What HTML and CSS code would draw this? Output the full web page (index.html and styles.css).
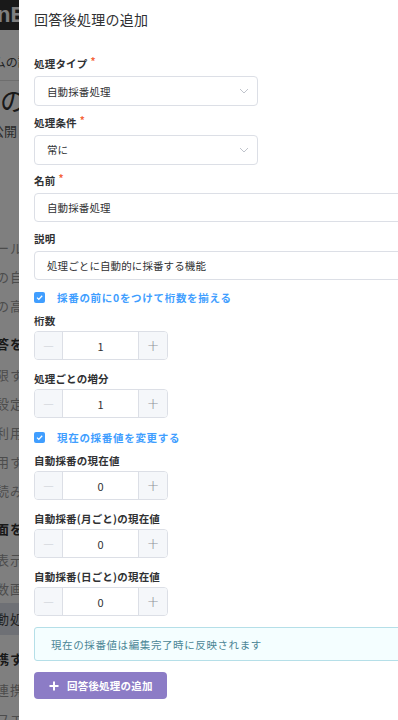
FILE: index.html
```html
<!DOCTYPE html>
<html lang="ja">
<head>
    <meta charset="UTF-8">
    <meta name="viewport" content="width=device-width, initial-scale=1.0">
    <title>回答後処理の追加</title>
    <link rel="stylesheet" href="styles.css">
</head>
<body>
    <!-- page behind the drawer -->
    <div class="page">
        <header class="topbar"><span class="logo">nB</span></header>
        <div class="page-title-small">フォームの設定</div>
        <div class="page-title">の設定</div>
        <div class="page-sub">非公開</div>
        <ul class="menu">
            <li class="menu-item gap">メール</li>
            <li class="menu-item">その自動</li>
            <li class="menu-item">その高度</li>
            <li class="menu-item head">回答を設定</li>
            <li class="menu-item">制限する</li>
            <li class="menu-item">の設定で</li>
            <li class="menu-item">を利用す</li>
            <li class="menu-item">を用する</li>
            <li class="menu-item">の読み込</li>
            <li class="menu-item head">画面を設</li>
            <li class="menu-item">の表示を</li>
            <li class="menu-item">の数画面</li>
            <li class="menu-item active">自動処理</li>
            <li class="menu-item head">連携する</li>
            <li class="menu-item">と連携す</li>
            <li class="menu-item">のフエー</li>
        </ul>
    </div>
    <div class="mask"></div>

    <aside class="drawer">
        <div class="drawer-header">
            <h2 class="drawer-title">回答後処理の追加</h2>
        </div>
        <form class="drawer-body">
            <div class="form-item">
                <label class="form-label required">処理タイプ</label>
                <div class="select">
                    <span>自動採番処理</span>
                    <svg class="chevron" width="10" height="6" viewBox="0 0 10 6"><path d="M1 1l4 4 4-4" fill="none" stroke="#c0c4cc" stroke-width="1"/></svg>
                </div>
            </div>
            <div class="form-item">
                <label class="form-label required">処理条件</label>
                <div class="select">
                    <span>常に</span>
                    <svg class="chevron" width="10" height="6" viewBox="0 0 10 6"><path d="M1 1l4 4 4-4" fill="none" stroke="#c0c4cc" stroke-width="1"/></svg>
                </div>
            </div>
            <div class="form-item">
                <label class="form-label required">名前</label>
                <div class="input">自動採番処理</div>
            </div>
            <div class="form-item">
                <label class="form-label">説明</label>
                <div class="input">処理ごとに自動的に採番する機能</div>
            </div>

            <div class="check-row">
                <span class="checkbox"><svg width="11" height="11" viewBox="0 0 11 11"><path d="M3 5.6l1.8 1.8L8.2 3.8" fill="none" stroke="#fff" stroke-width="1.3"/></svg></span>
                <span class="check-label">採番の前に0をつけて桁数を揃える</span>
            </div>
            <div class="form-item num">
                <label class="form-label">桁数</label>
                <div class="number">
                    <span class="num-btn">&minus;</span>
                    <span class="num-value">1</span>
                    <span class="num-btn">+</span>
                </div>
            </div>
            <div class="form-item num last">
                <label class="form-label">処理ごとの増分</label>
                <div class="number">
                    <span class="num-btn">&minus;</span>
                    <span class="num-value">1</span>
                    <span class="num-btn">+</span>
                </div>
            </div>

            <div class="check-row">
                <span class="checkbox"><svg width="11" height="11" viewBox="0 0 11 11"><path d="M3 5.6l1.8 1.8L8.2 3.8" fill="none" stroke="#fff" stroke-width="1.3"/></svg></span>
                <span class="check-label">現在の採番値を変更する</span>
            </div>
            <div class="form-item num">
                <label class="form-label">自動採番の現在値</label>
                <div class="number">
                    <span class="num-btn">&minus;</span>
                    <span class="num-value">0</span>
                    <span class="num-btn">+</span>
                </div>
            </div>
            <div class="form-item num">
                <label class="form-label">自動採番(月ごと)の現在値</label>
                <div class="number">
                    <span class="num-btn">&minus;</span>
                    <span class="num-value">0</span>
                    <span class="num-btn">+</span>
                </div>
            </div>
            <div class="form-item num">
                <label class="form-label">自動採番(日ごと)の現在値</label>
                <div class="number">
                    <span class="num-btn">&minus;</span>
                    <span class="num-value">0</span>
                    <span class="num-btn">+</span>
                </div>
            </div>

            <div class="notice">現在の採番値は編集完了時に反映されます</div>

            <button type="button" class="btn-add">
                <svg width="10" height="10" viewBox="0 0 10 10"><path d="M5 0.5v9M0.5 5h9" stroke="#fff" stroke-width="2"/></svg>
                <span>回答後処理の追加</span>
            </button>
        </form>
    </aside>
</body>
</html>
```

FILE: styles.css
```css
html, body {
    height: 100%;
    overflow: hidden;
}

body {
    margin: 0;
    font-family: "Noto Sans CJK JP", "Noto Sans", sans-serif;
    color: #303133;
    background-color: #fff;
}

/* page behind the drawer */
.page {
    margin-left: -26px;
    color: #888;
}

.topbar {
    height: 30px;
    background-color: #333;
    display: flex;
    align-items: center;
}

.logo {
    color: #fff;
    font-family: "Liberation Sans", sans-serif;
    font-weight: bold;
    font-size: 22px;
    margin-left: 23px;
}

.page-title-small {
    font-size: 12px;
    line-height: 16px;
    margin-top: 24px;
    text-indent: -16px;
    color: #444;
    padding-bottom: 10px;
    border-bottom: 1px solid #ddd;
}

.page-title {
    font-size: 26px;
    line-height: 34px;
    margin-top: 2px;
    padding-left: 26px;
    color: #333;
}

.page-sub {
    font-size: 13px;
    line-height: 20px;
    margin-top: 4px;
    padding-left: 4px;
    color: #555;
}

.menu {
    list-style: none;
    margin: 0;
    padding: 0;
}

.menu-item {
    font-size: 13px;
    line-height: 29px;
    padding-left: 8px;
    color: #999;
    letter-spacing: 1px;
}

.menu-item.gap {
    margin-top: 92px;
}

.menu-item.head {
    font-weight: bold;
    color: #333;
    margin-top: 8px;
    line-height: 32px;
}

.menu-item.active {
    background-color: #dde1ea;
    color: #444;
    line-height: 32px;
}

.mask {
    position: fixed;
    top: 0;
    right: 0;
    bottom: 0;
    left: 0;
    background-color: rgba(0, 0, 0, 0.5);
}

/* drawer */
.drawer {
    position: fixed;
    top: 0;
    bottom: 0;
    left: 19px;
    width: 470px;
    background-color: #fff;
}

.drawer-header {
    padding: 11px 15px 0;
}

.drawer-title {
    margin: 0;
    font-size: 14px;
    line-height: 16px;
    font-weight: normal;
    color: #303133;
    letter-spacing: 0.3px;
}

.drawer-body {
    padding: 29px 15px 0;
}

.form-item {
    margin-bottom: 8.5px;
}

.form-item.num {
    margin-bottom: 11px;
}

.form-item.num .form-label {
    margin-bottom: 2px;
}

.form-item.last {
    margin-bottom: 10px;
}

.form-label {
    display: block;
    font-size: 10.5px;
    line-height: 16px;
    font-weight: bold;
    color: #303133;
    margin-bottom: 4px;
    letter-spacing: 0.2px;
}

.form-label.required::after {
    content: "*";
    color: #f5653a;
    font-size: 10px;
    margin-left: 3px;
    vertical-align: top;
    line-height: 10px;
}

.select, .input {
    height: 29px;
    box-sizing: border-box;
    border: 1px solid #dcdfe6;
    border-radius: 4px;
    display: flex;
    align-items: center;
    padding: 0 8px 0 12px;
    font-size: 10.5px;
    color: #303133;
    letter-spacing: 0.1px;
}

.select {
    width: 224px;
    height: 30px;
    justify-content: space-between;
}

.chevron {
    display: block;
}

.check-row {
    display: flex;
    align-items: center;
    height: 20px;
    margin: -1px 0 6px;
}

.checkbox {
    width: 11px;
    height: 11px;
    border-radius: 2px;
    background-color: #409eff;
    display: flex;
    margin-right: 12px;
}

.check-label {
    font-size: 10.5px;
    font-weight: bold;
    color: #409eff;
    letter-spacing: 0.7px;
}

.number {
    width: 134px;
    height: 29px;
    box-sizing: border-box;
    border: 1px solid #dcdfe6;
    border-radius: 4px;
    display: grid;
    grid-template-columns: 28px 1fr 29px;
    overflow: hidden;
}

.num-btn {
    background-color: #f5f7fa;
    color: #909399;
    display: flex;
    align-items: center;
    justify-content: center;
    font-size: 15px;
    font-family: "DejaVu Sans", sans-serif;
    font-weight: 200;
}

.num-btn:first-child {
    border-right: 1px solid #dcdfe6;
    color: #c8ccd2;
}

.num-btn:last-child {
    border-left: 1px solid #dcdfe6;
}

.num-value {
    display: flex;
    align-items: center;
    justify-content: center;
    font-size: 11px;
    color: #303133;
}

.notice {
    margin-top: 1px;
    height: 34px;
    box-sizing: border-box;
    border: 1px solid #b5dfe8;
    border-radius: 3px;
    background-color: #f4feff;
    display: flex;
    align-items: center;
    padding-left: 16px;
    font-size: 10.5px;
    color: #4a8595;
    letter-spacing: 0.6px;
}

.btn-add {
    margin-top: 11px;
    width: 133px;
    height: 27px;
    border: none;
    border-radius: 4px;
    background-color: #8c7cc6;
    color: #fff;
    display: flex;
    align-items: center;
    padding: 0 0 0 15px;
    font-family: inherit;
    font-size: 10.5px;
    font-weight: bold;
    letter-spacing: 0.2px;
    cursor: pointer;
}

.btn-add svg {
    margin-right: 8px;
}
```
